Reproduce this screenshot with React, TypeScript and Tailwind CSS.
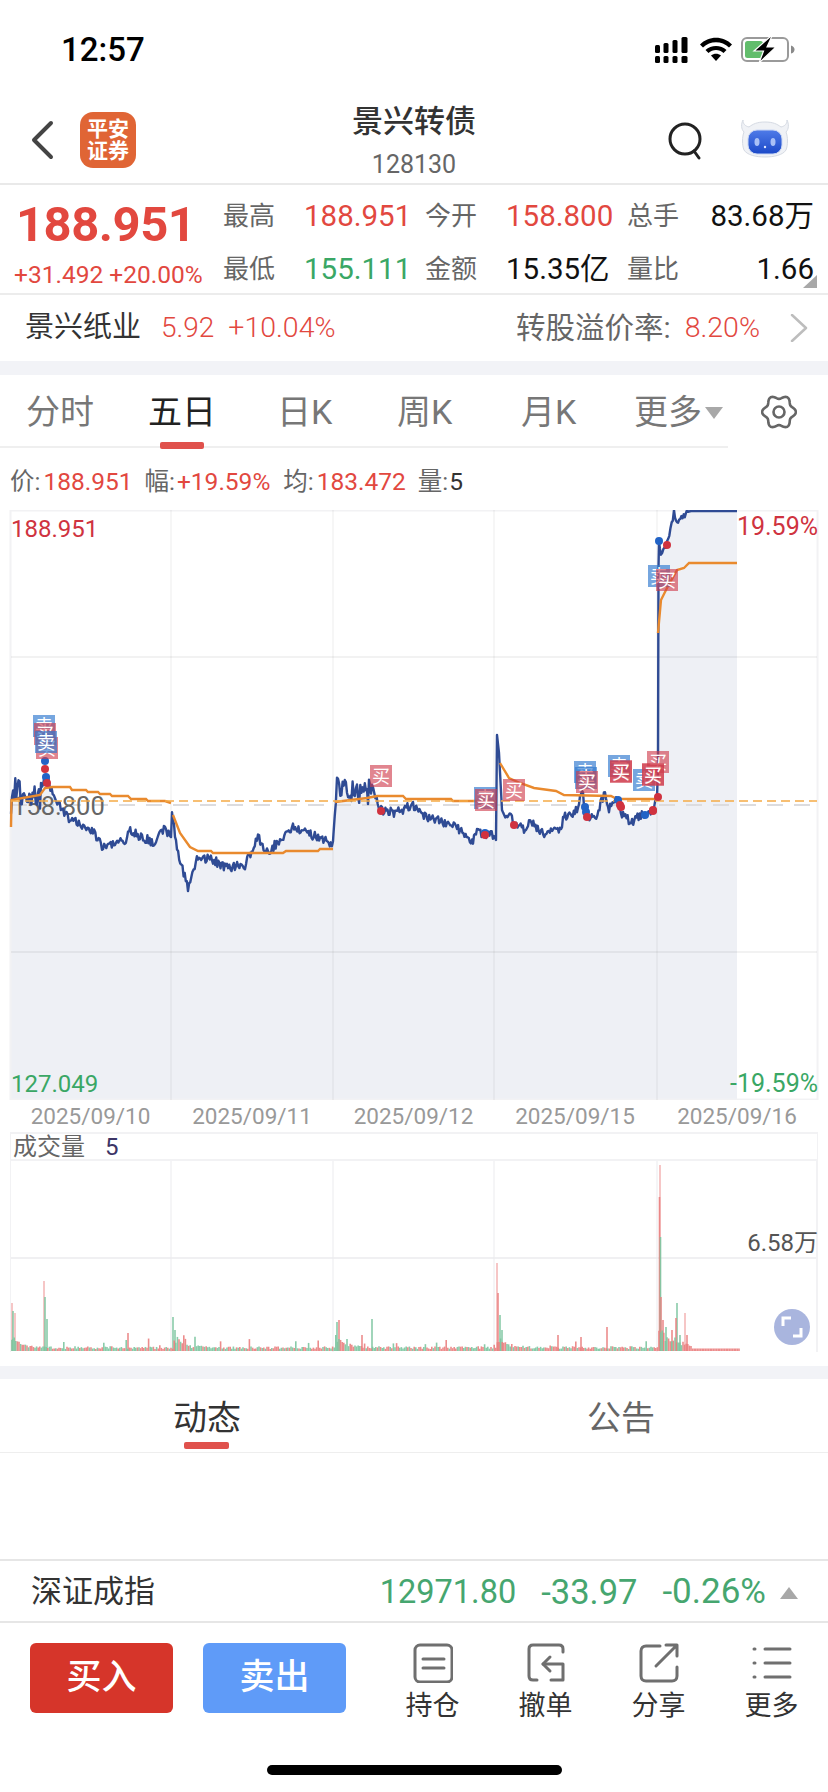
import React from 'react';

type Pt = [number, number];

// small seeded rng so the chart looks the same on every load
const makeRng = (seed: number) => () => {
    seed = (seed * 1664525 + 1013904223) % 4294967296;
    return seed / 4294967296;
};

const pricePts: Pt[] = [
    [11, 820], [12, 787], [25, 795], [40, 797], [42, 787], [47, 777], [55, 800], [62, 808], [70, 820], [93, 830], [102, 847], [127, 840], [128, 830], [155, 843], [165, 828], [171, 837],
    [172, 813], [177, 850], [188, 888], [198, 857], [213, 860], [227, 868], [245, 865], [258, 837], [267, 853], [293, 827], [317, 837], [333, 845],
    [333.5, 833], [337, 785], [367, 795], [372, 785], [380, 810], [395, 813], [413, 805], [427, 817], [457, 827], [472, 843], [477, 833], [494, 835],
    [496, 840], [497, 735], [499, 753], [502, 810], [524, 830], [529, 820], [542, 833], [561, 830], [564, 817], [577, 810], [582, 790], [586, 815], [594, 820], [605, 793], [609, 810], [616, 797], [622, 813], [631, 823], [644, 813], [654, 810], [657, 797],
    [658, 767], [658.5, 567], [659, 542], [661, 557], [667, 543], [674, 513], [677, 523], [687, 512], [691, 511], [737, 511],
];

const avgDays: Pt[][] = [
    [[11, 827], [11.5, 800], [40, 795], [45, 788], [52, 787], [70, 787], [72, 790], [86, 790], [88, 792], [98, 792], [100, 794], [110, 794], [112, 796], [128, 796], [131, 799], [146, 799], [148, 801], [165, 801], [171, 803]],
    [[173, 815], [180, 833], [190, 847], [198, 851], [211, 851], [213, 853], [283, 853], [286, 851], [318, 851], [320, 849], [333, 849]],
    [[335, 802], [367, 798], [377, 796], [403, 796], [406, 799], [451, 799], [453, 801], [494, 801]],
    [[500, 763], [509, 778], [520, 783], [534, 788], [556, 791], [564, 795], [611, 796], [617, 799], [657, 799]],
    [[658, 633], [661, 600], [667, 588], [677, 570], [684, 568], [689, 563], [737, 563]],
];

const buildPrice = () => {
    const rng = makeRng(7);
    const out: Pt[] = [];
    for (let i = 0; i < pricePts.length - 1; i++) {
        const [x0, y0] = pricePts[i];
        const [x1, y1] = pricePts[i + 1];
        const steps = Math.max(1, Math.round((x1 - x0) / 1.1));
        for (let s = 0; s < steps; s++) {
            const x = x0 + ((x1 - x0) * s) / steps;
            const y = y0 + ((y1 - y0) * s) / steps;
            let amp = 0;
            if (x < 42 || (x > 334 && x < 372)) amp = 24;
            else if (x < 495 || (x > 503 && x < 657)) amp = 9;
            else if (x > 659 && x < 688) amp = 6;
            out.push([x, y + (rng() - 0.5) * amp]);
        }
    }
    out.push([737, 511]);
    return out;
};

const pts = (list: Pt[]) => list.map(([x, y]) => `${x.toFixed(1)},${y.toFixed(1)}`).join(' ');

const price = buildPrice();
const gridX = [171, 333, 494, 657];

// [x, y, kind] boxes: top-left corner of a 22px tag
const tags: [number, number, 'b' | 's'][] = [
    [33, 715, 's'], [34, 723, 'b'], [36, 737, 'b'], [35, 731, 's'], [370, 765, 'b'],
    [474, 787, 's'], [475, 789, 'b'], [503, 779, 'b'],
    [574, 761, 's'], [575, 767, 's'], [576, 771, 'b'], [608, 755, 's'], [610, 760, 'b'], [610, 761, 'b'],
    [633, 769, 's'], [647, 751, 'b'], [642, 763, 'b'], [642, 764, 'b'], [648, 565, 's'], [656, 569, 'b'],
];

const dots: [number, number, 'b' | 's'][] = [
    [45, 761, 's'], [45, 769, 'b'], [46, 777, 's'], [47, 783, 'b'], [381, 811, 'b'],
    [485, 833, 's'], [485, 835, 'b'], [514, 825, 'b'], [585, 807, 's'], [586, 812, 's'], [587, 817, 'b'],
    [618, 800, 's'], [620, 805, 'b'], [621, 807, 'b'], [645, 815, 's'], [653, 810, 'b'], [653, 811, 'b'], [658, 797, 'b'], [659, 541, 's'], [667, 545, 'b'],
];

const PriceChart = () => (
    <svg viewBox="0 510 828 590" className="block w-[828px] h-[590px] font-['Roboto','Noto_Sans_CJK_SC',sans-serif]">
        <polygon points={`11,1100 ${pts(price)} 737,1100`} fill="#eef0f5" />
        <rect x="10.5" y="510.5" width="807" height="589" fill="none" stroke="#f2f2f4" strokeWidth="2" />
        <line x1="11" x2="817" y1="657" y2="657" stroke="#000000" strokeOpacity="0.05" strokeWidth="2" />
        <line x1="11" x2="817" y1="952" y2="952" stroke="#000000" strokeOpacity="0.05" strokeWidth="2" />
        {gridX.map((x) => (
            <line key={x} x1={x} x2={x} y1="510" y2="1100" stroke="#000000" strokeOpacity="0.07" strokeWidth="1" />
        ))}
        <line x1="11" x2="817" y1="805" y2="805" stroke="#dcdcdf" strokeWidth="2" strokeDasharray="16 11" />
        <text x="12" y="815" fontSize="25.5" fill="#666666">158.800</text>
        <polyline points={pts(price)} fill="none" stroke="#2f4b94" strokeWidth="2.4" strokeLinejoin="round" />
        {avgDays.map((d, i) => (
            <polyline key={i} points={pts(d)} fill="none" stroke="#e98a2e" strokeWidth="2.4" />
        ))}
        <line x1="11" x2="817" y1="801" y2="801" stroke="#f5ab45" strokeWidth="1.5" strokeDasharray="9 5" />
        {dots.map(([x, y, k], i) => (
            <circle key={i} cx={x} cy={y} r="4" fill={k === 'b' ? '#d0323f' : '#2263c6'} />
        ))}
        {tags.map(([x, y, k], i) => (
            <g key={i}>
                <rect x={x} y={y} width="22" height="22" fill={k === 'b' ? '#cf3a4a' : '#2f78cf'} fillOpacity={k === 'b' ? 0.62 : 0.66} />
                <text x={x + 11} y={y + 18} fontSize="18" textAnchor="middle" fill="#ffffff">{k === 'b' ? '买' : '卖'}</text>
            </g>
        ))}
    </svg>
);

const BAR_COLOR = { p: '#f3b0b0', r: '#ea8080', g: '#7cc5a0' };

// the tall bars that can be read off the picture: x, top, colour
const spikes: [number, number, 'p' | 'r' | 'g'][] = [
    [12, 1303, 'p'], [13, 1311, 'g'], [15, 1313, 'p'], [44, 1281, 'p'], [45, 1297, 'g'], [47, 1319, 'g'], [128, 1333, 'r'], [173, 1317, 'g'], [175, 1330, 'g'],
    [337, 1322, 'g'], [339, 1320, 'r'], [372, 1319, 'g'], [362, 1335, 'r'],
    [497, 1263, 'p'], [498, 1293, 'r'], [500, 1315, 'g'], [502, 1330, 'g'], [607, 1327, 'r'], [581, 1337, 'r'], [558, 1335, 'r'],
    [660, 1165, 'p'], [659.5, 1197, 'r'], [660.5, 1237, 'g'], [661, 1297, 'r'], [676, 1318, 'r'], [677, 1303, 'g'], [685, 1313, 'p'], [663, 1320, 'r'], [666, 1327, 'g'], [672, 1330, 'r'], [680, 1335, 'g'], [687, 1335, 'r'],
];

const buildBars = () => {
    const rng = makeRng(21);
    const bars: { x: number; top: number; color: string }[] = [];
    const starts = [11, 173, 335, 497, 659];
    for (let x = 11; x < 740; x += 1.6) {
        const day = starts.filter((s) => s <= x).pop() as number;
        const since = x - day;
        let h = 2.5;
        if (x <= 692) {
            const decay = day === 659 ? 20 * Math.exp(-since / 22) : 16 * Math.exp(-since / 9);
            const r = rng();
            h = 2 + decay * (0.4 + rng() * 0.6) + (r > 0.93 ? rng() * 11 : r * 3);
        }
        bars.push({ x, top: 1351 - h, color: x > 692 || rng() > 0.5 ? BAR_COLOR.r : BAR_COLOR.g });
    }
    spikes.forEach(([x, top, c]) => bars.push({ x, top, color: BAR_COLOR[c] }));
    return bars.sort((a, b) => a.top - b.top);
};

const VolumeChart = () => (
    <svg viewBox="0 1161 828 192" className="block w-[828px] h-[192px]">
        <line x1="11" x2="817" y1="1258" y2="1258" stroke="#f0f0f2" strokeWidth="2" />
        {gridX.map((x) => (
            <line key={x} x1={x} x2={x} y1="1161" y2="1352" stroke="#ebebee" strokeWidth="1" />
        ))}
        {buildBars().map((b, i) => (
            <line key={i} x1={b.x} x2={b.x} y1={b.top} y2="1351" stroke={b.color} strokeWidth="1.6" strokeOpacity="0.9" />
        ))}
        <line x1="10.5" x2="10.5" y1="1161" y2="1352" stroke="#f2f2f4" strokeWidth="1" />
        <line x1="817" x2="817" y1="1161" y2="1352" stroke="#f2f2f4" strokeWidth="2" />
    </svg>
);

const StatusIcons = () => (
    <svg viewBox="655 36 140 28" className="w-[140px] h-[28px]">
        <rect x="655" y="45" width="5" height="8" rx="1.5" />
        <rect x="663.5" y="43" width="5" height="10" rx="1.5" />
        <rect x="672.5" y="40" width="5" height="13" rx="1.5" />
        <rect x="681.5" y="37" width="6" height="16" rx="1.5" />
        <rect x="655" y="56" width="5" height="7" rx="1.5" />
        <rect x="663.5" y="56" width="5" height="7" rx="1.5" />
        <rect x="672.5" y="56" width="5" height="7" rx="1.5" />
        <rect x="681.5" y="56" width="6" height="7" rx="1.5" />
        <path d="M700 44.5C708.5 35.5 723.5 35.5 732 44.5L729 47.5C722 40.5 710 40.5 703 47.5Z" />
        <path d="M705.5 50C711 44.5 721 44.5 726.5 50L723.5 53C719.5 49 712.5 49 708.5 53Z" />
        <path d="M711 55.5C714 53 718 53 721 55.5L716 61Z" />
        <rect x="742" y="38" width="46" height="23" rx="5" fill="none" stroke="#9a9a9a" strokeWidth="2" />
        <rect x="745" y="41" width="18" height="17" rx="2.5" fill="#62bd6c" />
        <path d="M791 45.5C793.5 46 794.5 48 794.5 49.5S793.5 53 791 53.5Z" fill="#8a8a8a" />
        <path d="M771 36L754 51H763.5L759 63L776 47H767L772 36Z" stroke="#ffffff" strokeWidth="1.2" />
    </svg>
);

const RobotIcon = () => (
    <svg viewBox="0 0 50 40" className="w-[50px] h-[40px]">
        <defs>
            <linearGradient id="visor" x1="0" y1="0" x2="0" y2="1">
                <stop offset="0" stopColor="#4f7be8" />
                <stop offset="1" stopColor="#1c49c8" />
            </linearGradient>
        </defs>
        <path d="M3 1C3 5 5 7 9 8C13 5 17 3 25 3C33 3 37 5 41 8C45 7 47 5 47 1C49 5 49 10 46 13C48 18 48 26 46 31C43 36 34 38 25 38C16 38 7 36 4 31C2 26 2 18 4 13C1 10 1 5 3 1Z" fill="#f0f2f6" stroke="#d5dae3" strokeWidth="1" />
        <rect x="8" y="11" width="34" height="24" rx="9" fill="url(#visor)" stroke="#c9d6f4" strokeWidth="1" />
        <ellipse cx="17" cy="23" rx="2.5" ry="4" fill="#a9c0f6" />
        <ellipse cx="33" cy="23" rx="2.5" ry="4" fill="#a9c0f6" />
        <circle cx="25" cy="28" r="1.2" fill="#e3eaff" />
    </svg>
);

// wavy outline of the settings gear, six lobes
const gearPoints = Array.from({ length: 72 }, (_, i) => {
    const a = (i * Math.PI) / 36;
    const r = 15 + 1.9 * Math.cos(6 * a);
    return `${(18 + r * Math.cos(a)).toFixed(2)},${(18 + r * Math.sin(a)).toFixed(2)}`;
}).join(' ');

const StatCell = ({ label, value, color, right }: { label: string; value: string; color: string; right?: boolean }) => (
    <>
        <span className="text-[26px] text-[#666666]">{label}</span>
        <span className={`text-[29.5px] whitespace-nowrap ${color} ${right ? 'text-right' : ''}`}>{value}</span>
    </>
);

const Tab = ({ label, w, active }: { label: string; w: string; active?: boolean }) => (
    <span className={`${w} text-[34px] ${active ? 'text-[#222222]' : 'text-[#777777]'}`}>{label}</span>
);

const BarIcon = ({ label, children }: { label: string; children: React.ReactNode }) => (
    <div className="w-[113px] flex flex-col items-center">
        <svg viewBox="0 0 40 40" className="w-[40px] h-[40px]" fill="none" stroke="#6f6f6f" strokeWidth="3" strokeLinecap="round" strokeLinejoin="round">
            {children}
        </svg>
        <span className="mt-[5px] text-[27px] leading-[36px] text-[#333333]">{label}</span>
    </div>
);

export default function App() {
    return (
        <div className="w-[828px] h-[1792px] bg-white overflow-hidden font-['Roboto','Noto_Sans_CJK_SC',sans-serif]">
            {/* status bar */}
            <div className="h-[100px] flex items-start justify-between pl-[61px] pr-[33px] pt-[30px]">
                <span className="text-[33px] leading-[40px] font-medium text-black">12:57</span>
                <div className="pt-[6px]"><StatusIcons /></div>
            </div>

            {/* header */}
            <div className="relative h-[85px] border-b-2 border-[#e9e9e9] flex items-start pl-[30px] pr-[38px]">
                <svg viewBox="0 0 24 40" className="w-[24px] h-[40px] mt-[20px]" fill="none" stroke="#444444" strokeWidth="4" strokeLinecap="round" strokeLinejoin="round">
                    <path d="M21 3L4 20L21 37" />
                </svg>
                <div className="ml-[26px] mt-[12px] w-[56px] h-[56px] rounded-[13px] bg-[#e06535] flex flex-col items-center justify-center text-white text-[21px] leading-[22px] font-bold">
                    <span>平安</span>
                    <span>证券</span>
                </div>
                <div className="flex-1 flex flex-col items-center pl-[24px]">
                    <span className="text-[31px] leading-[44px] font-medium text-[#333333]">景兴转债</span>
                    <span className="text-[25px] leading-[42px] text-[#666666]">128130</span>
                </div>
                <svg viewBox="0 0 36 38" className="w-[36px] h-[38px] mt-[22px]" fill="none" stroke="#222222" strokeWidth="3">
                    <circle cx="17" cy="17" r="15" />
                    <path d="M26 29L31 36" strokeLinecap="round" />
                </svg>
                <div className="ml-[36px] mt-[19px]"><RobotIcon /></div>
            </div>

            {/* quote */}
            <div className="relative h-[110px] border-b-2 border-[#ececec] flex">
                <div className="w-[223px] pl-[14px] flex flex-col">
                    <span className="pl-[2px] mt-[10px] text-[49px] leading-[60px] font-bold text-[#e2483f] tracking-[-0.5px]">188.951</span>
                    <span className="mt-[5px] text-[24.5px] leading-[30px] text-[#e2483f] whitespace-nowrap">+31.492 +20.00%</span>
                </div>
                <div className="grid grid-cols-[81px_121px_81px_121px_82px_105px] grid-rows-[53px_53px] items-center pt-[5px]">
                    <StatCell label="最高" value="188.951" color="text-[#e2483f]" />
                    <StatCell label="今开" value="158.800" color="text-[#e2483f]" />
                    <StatCell label="总手" value="83.68万" color="text-[#111111]" right />
                    <StatCell label="最低" value="155.111" color="text-[#3aa765]" />
                    <StatCell label="金额" value="15.35亿" color="text-[#111111]" />
                    <StatCell label="量比" value="1.66" color="text-[#111111]" right />
                </div>
                <svg viewBox="0 0 14 13" className="absolute right-[11px] bottom-[5px] w-[14px] h-[13px]">
                    <path d="M14 0V13H0Z" fill="#a8a8a8" />
                </svg>
            </div>

            {/* underlying */}
            <div className="h-[66px] flex items-center pl-[25px] pr-[20px]">
                <span className="text-[29px] text-[#333333]">景兴纸业</span>
                <span className="ml-[20px] text-[28px] text-[#e2483f] font-light">5.92</span>
                <span className="ml-[14px] text-[28.5px] text-[#e2483f] font-light">+10.04%</span>
                <span className="ml-auto text-[29.5px] text-[#666666]">转股溢价率:</span>
                <span className="ml-[14px] text-[28.5px] text-[#e2483f] font-light">8.20%</span>
                <svg viewBox="0 0 18 28" className="ml-[30px] w-[18px] h-[28px]" fill="none" stroke="#bdbdbd" strokeWidth="2.5" strokeLinecap="round" strokeLinejoin="round">
                    <path d="M2 1L16 14L2 27" />
                </svg>
            </div>
            <div className="h-[14px] bg-[#f2f3f7]" />

            {/* period tabs */}
            <div className="relative h-[73px] flex items-center pl-[26px] pt-[1px]">
                <div className="w-[728px] h-[73px] absolute left-0 top-0 border-b-2 border-[#efefef]" />
                <Tab label="分时" w="w-[122px]" />
                <Tab label="五日" w="w-[129px]" active />
                <Tab label="日K" w="w-[120px]" />
                <Tab label="周K" w="w-[124px]" />
                <Tab label="月K" w="w-[113px]" />
                <span className="text-[34px] text-[#777777]">更多</span>
                <svg viewBox="0 0 18 12" className="ml-[3px] mt-[2px] w-[18px] h-[12px]"><path d="M0 0H18L9 12Z" fill="#a8a8a8" /></svg>
                <svg viewBox="0 0 36 36" className="ml-[38px] w-[36px] h-[36px]" fill="none" stroke="#666666" strokeWidth="2.6" strokeLinejoin="round">
                    <polygon points={gearPoints} />
                    <circle cx="18" cy="18" r="5.5" />
                </svg>
                <div className="absolute left-[160px] top-[67px] w-[44px] h-[7px] rounded-[2px] bg-[#e0514c]" />
            </div>

            {/* crosshair info */}
            <div className="h-[62px] pt-[6px] flex items-center pl-[10px] text-[24.5px] text-[#e2483f]">
                <span className="text-[#666666]">价:</span>
                <span className="ml-[3px]">188.951</span>
                <span className="ml-[12px] text-[#666666]">幅:</span>
                <span className="ml-[2px]">+19.59%</span>
                <span className="ml-[13px] text-[#666666]">均:</span>
                <span className="ml-[3px]">183.472</span>
                <span className="ml-[12px] text-[#666666]">量:</span>
                <span className="ml-[1px] text-[#333333]">5</span>
            </div>

            {/* price chart */}
            <div className="relative h-[590px]">
                <PriceChart />
                <span className="absolute left-[11px] top-[4px] text-[24px] leading-[30px] text-[#cf3340]">188.951</span>
                <span className="absolute right-[10px] top-[2px] text-[25px] leading-[30px] text-[#cf3340]">19.59%</span>
                <span className="absolute left-[11px] bottom-[1px] text-[24px] leading-[30px] text-[#3aa765]">127.049</span>
                <span className="absolute right-[10px] bottom-[1px] text-[25px] leading-[30px] text-[#3aa765]">-19.59%</span>
            </div>

            {/* dates */}
            <div className="h-[32px] grid grid-cols-[161px_162px_161px_162px_162px] items-center pl-[10px] text-[22.5px] text-[#999999] text-center">
                <span>2025/09/10</span>
                <span>2025/09/11</span>
                <span>2025/09/12</span>
                <span>2025/09/15</span>
                <span>2025/09/16</span>
            </div>

            {/* volume */}
            <div className="relative">
                <div className="mx-[10px] h-[29px] border-t-2 border-b-2 border-x border-[#f2f2f4] flex items-center pl-[2px] text-[24px] leading-[24px]">
                    <span className="text-[#666666]">成交量</span>
                    <span className="ml-[20px] text-[#3c3566]">5</span>
                </div>
                <VolumeChart />
                <span className="absolute right-[10px] top-[96px] text-[24px] leading-[30px] text-[#555555]">6.58万</span>
                <div className="absolute left-[774px] top-[177px] w-[36px] h-[36px] rounded-full bg-[#a9b5de] flex items-center justify-center">
                    <svg viewBox="0 0 22 22" className="w-[22px] h-[22px]" fill="none" stroke="#ffffff" strokeWidth="3">
                        <path d="M2 10V2H10M20 12V20H12" />
                    </svg>
                </div>
            </div>
            <div className="h-[13px] mt-[13px] bg-[#f2f3f7]" />

            {/* news tabs */}
            <div className="relative h-[74px] pt-[5px] border-b border-[#eeeeee] grid grid-cols-2 items-center text-center text-[34px]">
                <span className="text-[#333333]">动态</span>
                <span className="text-[#666666]">公告</span>
                <div className="absolute left-[184px] top-[63px] w-[45px] h-[7px] rounded-[2px] bg-[#e0514c]" />
            </div>
            <div className="h-[106px]" />

            {/* index ticker */}
            <div className="h-[64px] pt-[3px] border-y-2 border-[#e6e6e6] flex items-center pl-[31px] pr-[30px]">
                <span className="text-[31px] text-[#333333]">深证成指</span>
                <span className="ml-auto text-[32.5px] text-[#46a66f]">12971.80</span>
                <span className="ml-[25px] text-[34.5px] text-[#46a66f]">-33.97</span>
                <span className="ml-[25px] text-[35px] text-[#46a66f]">-0.26%</span>
                <svg viewBox="0 0 18 12" className="ml-[14px] w-[18px] h-[12px]"><path d="M9 0L18 12H0Z" fill="#a8a8a8" /></svg>
            </div>

            {/* trade bar */}
            <div className="h-[119px] flex items-start pl-[30px] pt-[20px]">
                <button className="w-[144px] h-[70px] rounded-[6px] bg-[#d6352a] text-white text-[35px] font-medium">买入</button>
                <button className="ml-[30px] w-[144px] h-[70px] rounded-[6px] bg-[#5f9bf8] text-white text-[35px] font-medium">卖出</button>
                <div className="ml-[30px] flex">
                    <BarIcon label="持仓">
                        <rect x="2" y="2" width="37" height="37" rx="5" />
                        <path d="M10 16H31M10 25H31" />
                    </BarIcon>
                    <BarIcon label="撤单">
                        <path d="M37 9V6C37 3.5 35.5 2 33 2H7C4.5 2 3 3.5 3 6V33C3 35.5 4.5 37 7 37H11" />
                        <path d="M25 37H37V21H17" />
                        <path d="M24 14L17 21L24 28" />
                    </BarIcon>
                    <BarIcon label="分享">
                        <path d="M21 3H7C4 3 2 5 2 8V33C2 36 4 38 7 38H33C36 38 38 36 38 33V24" />
                        <path d="M17 23L37 3M27 2H38V13" />
                    </BarIcon>
                    <BarIcon label="更多">
                        <path d="M2 6H3M13 6H38M2 20H3M13 20H38M2 34H3M13 34H38" />
                    </BarIcon>
                </div>
            </div>

            {/* home indicator */}
            <div className="mt-[23px] ml-[267px] w-[295px] h-[10px] rounded-full bg-black" />
        </div>
    );
}
